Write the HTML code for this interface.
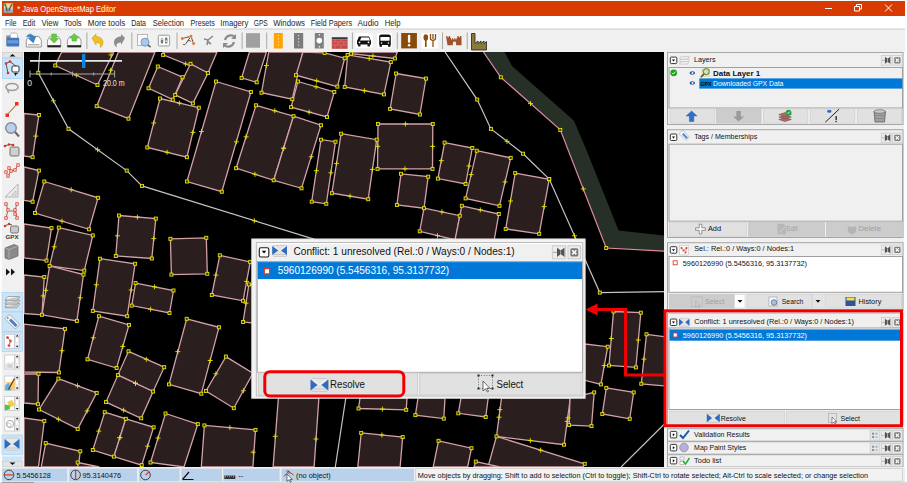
<!DOCTYPE html>
<html><head><meta charset="utf-8"><style>html,body{margin:0;padding:0;width:907px;height:483px;overflow:hidden;background:#fcfcfc}svg{display:block}text{font-family:"Liberation Sans",sans-serif}</style></head><body><svg width="907" height="483" viewBox="0 0 907 483" font-family="Liberation Sans, sans-serif"><rect x="0" y="0" width="907" height="483" fill="#fcfcfc"/><rect x="2" y="1" width="903" height="15" fill="#d83b01"/><rect x="3.8" y="3.2" width="9" height="9.2" fill="#e8dcae"/><path d="M3.8 9L7.5 7.5L12.8 10V12.4H3.8Z" fill="#7ab4e4"/><rect x="3.8" y="3.2" width="2.4" height="2.4" fill="#48b048"/><path d="M5.5 5L7.2 11.5" fill="none" stroke="#6a4a2a" stroke-width="1.1"/><path d="M12 3.8L8.8 10.8" fill="none" stroke="#8a5a20" stroke-width="1.5"/><text x="17.2" y="12.2" font-size="8.8" fill="#ffffff" textLength="98.6" lengthAdjust="spacingAndGlyphs">* Java OpenStreetMap Editor</text><path d="M825 8.5h7" fill="none" stroke="#fff" stroke-width="1"/><path d="M854.5 6.5h5v4.5h-5zM856.5 6.5v-2h5v4.5h-2" fill="none" stroke="#fff" stroke-width="1"/><path d="M885 4.5l7 7M892 4.5l-7 7" fill="none" stroke="#fff" stroke-width="1"/><rect x="2" y="16" width="903" height="12.5" fill="#ffffff"/><text x="4.9" y="25.5" font-size="8.6" fill="#1e1e1e" textLength="11.6" lengthAdjust="spacingAndGlyphs">File</text><text x="22.7" y="25.5" font-size="8.6" fill="#1e1e1e" textLength="12.6" lengthAdjust="spacingAndGlyphs">Edit</text><text x="41.5" y="25.5" font-size="8.6" fill="#1e1e1e" textLength="16.9" lengthAdjust="spacingAndGlyphs">View</text><text x="64" y="25.5" font-size="8.6" fill="#1e1e1e" textLength="17.6" lengthAdjust="spacingAndGlyphs">Tools</text><text x="87.8" y="25.5" font-size="8.6" fill="#1e1e1e" textLength="37.4" lengthAdjust="spacingAndGlyphs">More tools</text><text x="131.2" y="25.5" font-size="8.6" fill="#1e1e1e" textLength="14.8" lengthAdjust="spacingAndGlyphs">Data</text><text x="152.8" y="25.5" font-size="8.6" fill="#1e1e1e" textLength="31.3" lengthAdjust="spacingAndGlyphs">Selection</text><text x="190.5" y="25.5" font-size="8.6" fill="#1e1e1e" textLength="24.3" lengthAdjust="spacingAndGlyphs">Presets</text><text x="220.3" y="25.5" font-size="8.6" fill="#1e1e1e" textLength="28" lengthAdjust="spacingAndGlyphs">Imagery</text><text x="253.8" y="25.5" font-size="8.6" fill="#1e1e1e" textLength="13.9" lengthAdjust="spacingAndGlyphs">GPS</text><text x="273.2" y="25.5" font-size="8.6" fill="#1e1e1e" textLength="31.8" lengthAdjust="spacingAndGlyphs">Windows</text><text x="310.7" y="25.5" font-size="8.6" fill="#1e1e1e" textLength="41.4" lengthAdjust="spacingAndGlyphs">Field Papers</text><text x="357.6" y="25.5" font-size="8.6" fill="#1e1e1e" textLength="21" lengthAdjust="spacingAndGlyphs">Audio</text><text x="384.8" y="25.5" font-size="8.6" fill="#1e1e1e" textLength="15.8" lengthAdjust="spacingAndGlyphs">Help</text><rect x="2" y="28.4" width="903" height="1.4" fill="#d2d2d2"/><rect x="2" y="29.8" width="903" height="22.2" fill="#f0f0f0"/><rect x="86.4" y="32.5" width="1" height="16.5" fill="#a8a8a8"/><rect x="131.3" y="32.5" width="1" height="16.5" fill="#a8a8a8"/><rect x="176.5" y="32.5" width="1" height="16.5" fill="#a8a8a8"/><rect x="241.6" y="32.5" width="1" height="16.5" fill="#a8a8a8"/><rect x="266.2" y="32.5" width="1" height="16.5" fill="#a8a8a8"/><rect x="351.9" y="32.5" width="1" height="16.5" fill="#a8a8a8"/><rect x="396.8" y="32.5" width="1" height="16.5" fill="#a8a8a8"/><rect x="442" y="32.5" width="1" height="16.5" fill="#a8a8a8"/><rect x="466.7" y="32.5" width="1" height="16.5" fill="#a8a8a8"/><rect x="6.3" y="35.5" width="4.5" height="10.5" fill="#8a8a8a"/><path d="M10.3 38.6v-3.6c0-1.5 1-2 2.5-2h2.5c1.5 0 2.3 1 2.3 2.5v3.1z" fill="#ffffff" stroke="#9a9a9a" stroke-width="0.7"/><rect x="6.6" y="37.8" width="12.6" height="8.7" fill="#3f78c4" rx="0.8"/><rect x="7.4" y="40.2" width="11" height="3.2" fill="#6c9ad8"/><path d="M26.3 40l2.5-3.6h10l2.5 3.6v7h-15z" fill="#ffffff" stroke="#8a8a8a" stroke-width="0.9"/><rect x="28" y="44" width="11.5" height="1.4" fill="#b0b0b0"/><path d="M26.5 36.5c1.5-3 6-3.5 7.5 0.5l1.8-0.6l-2.4 6.5l-5-4.3l2-0.6c-1-1.6-2.6-1.4-3.9-1.5z" fill="#3a84cc" stroke="#2a64a8" stroke-width="0.4"/><path d="M47.5 40l2.5-3.6h8.2l2.5 3.6v7h-13.2z" fill="#f8f8f8" stroke="#8a8a8a" stroke-width="0.8"/><rect x="47.5" y="45.2" width="13.2" height="2" fill="#222"/><path d="M51.8 34h4.6v4.5h2.2l-4.5 4.6l-4.5-4.6h2.2z" fill="#66cc44" stroke="#48a830" stroke-width="0.5"/><path d="M67.4 40l2.5-3.6h8.6l2.5 3.6v7h-13.6z" fill="#f8f8f8" stroke="#8a8a8a" stroke-width="0.8"/><rect x="67.4" y="45.2" width="13.6" height="2" fill="#222"/><path d="M74.2 33.5l4.6 4.6h-2.2v3h-4.6v-3h-2.2z" fill="#66cc44" stroke="#48a830" stroke-width="0.5"/><path d="M92 38l4-4v2.5c4 0 7 2.5 7 6c0 2.5-1.5 4.5-3 5c1-1.5 1-5-4-5v2.5z" fill="#f0c020" stroke="#c09010" stroke-width="0.5"/><path d="M125 38l-4-4v2.5c-4 0-7 2.5-7 6c0 2.5 1.5 4.5 3 5c-1-1.5-1-5 4-5v2.5z" fill="#8c8c8c"/><rect x="137.5" y="34.5" width="10" height="11" fill="#fafafa" stroke="#a8a8a8" stroke-width="0.8"/><circle cx="145" cy="42.2" r="4" fill="#a8c8f0" stroke="#7a98c0" stroke-width="1"/><path d="M147.8 45l2.8 2.2" fill="none" stroke="#666" stroke-width="1.6"/><rect x="158.3" y="35.2" width="11.3" height="10.8" fill="#fafafa" stroke="#9a9a9a" stroke-width="1" rx="1.2"/><rect x="160.8" y="38" width="2.4" height="5.5" fill="#6a7a80" rx="1"/><rect x="165" y="37.5" width="2.4" height="6" fill="#6a7a80" rx="1"/><rect x="161.3" y="38.5" width="1.4" height="1.4" fill="#fff"/><rect x="165.5" y="40.5" width="1.4" height="1.4" fill="#fff"/><path d="M182.4 38.5L190.9 36.2L193.6 43.5M190.9 36.2L186 43.5c-1 1.5-2.5 1.5-3 .5M188 41c1-1 2.5-.5 3 .5" fill="none" stroke="#443333" stroke-width="0.9"/><path d="M183 38.3l7.5-2" fill="none" stroke="#a8a020" stroke-width="0.5"/><circle cx="182.4" cy="38.5" r="1.7" fill="#f07020" stroke="#fff" stroke-width="0.4"/><circle cx="190.9" cy="36.2" r="1.7" fill="#f07020" stroke="#fff" stroke-width="0.4"/><circle cx="193.6" cy="43.5" r="1.7" fill="#f07020" stroke="#fff" stroke-width="0.4"/><path d="M204 39l4 1l5-4M208 40l-1 5M207 41l4 3" fill="none" stroke="#8a8a8a" stroke-width="1.6"/><path d="M225 40a6 6 0 0 1 10-3M234 42a6 6 0 0 1-10 3" fill="none" stroke="#8c8c8c" stroke-width="2.2"/><path d="M236 34v5h-5zM223 48v-5h5z" fill="#8c8c8c"/><rect x="246" y="33.2" width="14" height="14.5" fill="#a0a0a0"/><rect x="273.8" y="33" width="9" height="15.5" fill="#ffa300"/><path d="M278.3 35v12" fill="none" stroke="#fff" stroke-width="0.8" stroke-dasharray="1.2 2"/><rect x="294" y="33" width="9.2" height="15.5" fill="#7c7c7c"/><path d="M298.6 35v12" fill="none" stroke="#fff" stroke-width="0.8" stroke-dasharray="1.2 2"/><rect x="314.8" y="33" width="9" height="15.5" fill="#808080"/><circle cx="319.3" cy="40.6" r="2.8" fill="#fff"/><rect x="318.8" y="34" width="1" height="1.5" fill="#fff"/><rect x="318.8" y="46" width="1" height="1.5" fill="#fff"/><rect x="331.8" y="37.2" width="15.8" height="2" fill="#3a3a3a"/><rect x="331.8" y="39.2" width="15.8" height="9.6" fill="#c84848"/><path d="M331.8 42h15.8M331.8 45h15.8M335 39.2v2.8M341 39.2v2.8M338 42v3M344 42v3M335 45v3.8M341 45v3.8" fill="none" stroke="#e08a8a" stroke-width="0.5"/><rect x="355.5" y="33" width="17" height="15" fill="#ffffff"/><path d="M357 41l2-4.5h10l2 4.5v3.5h-14z" fill="#111"/><path d="M360 40.5l1.3-3h7.4l1.3 3z" fill="#fff"/><rect x="358" y="44.2" width="2.5" height="2.2" fill="#111"/><rect x="367.5" y="44.2" width="2.5" height="2.2" fill="#111"/><circle cx="359.5" cy="42.3" r="0.9" fill="#fff"/><circle cx="368.5" cy="42.3" r="0.9" fill="#fff"/><rect x="377" y="33" width="15" height="15" fill="#ffffff"/><path d="M379.2 45v-8.5c0-1.3 1-2 2.5-2h6.6c1.5 0 2.5 0.7 2.5 2v8.5z" fill="#111"/><rect x="380.4" y="37" width="9.2" height="3.8" fill="#fff" rx="0.6"/><circle cx="381.6" cy="43" r="0.8" fill="#fff"/><circle cx="388.4" cy="43" r="0.8" fill="#fff"/><rect x="379.6" y="44.5" width="2.3" height="2.3" fill="#111"/><rect x="388.1" y="44.5" width="2.3" height="2.3" fill="#111"/><rect x="401.2" y="33" width="15.7" height="15.4" fill="#8a4a08"/><rect x="407.9" y="34.8" width="2.4" height="8" fill="#fff" rx="1"/><circle cx="409.1" cy="45.3" r="1.3" fill="#fff"/><rect x="421.5" y="33" width="16" height="15.5" fill="#ffffff"/><ellipse cx="425.8" cy="37.5" rx="2.3" ry="3.3" fill="#8a4f10"/><rect x="425" y="39" width="1.6" height="8" fill="#8a4f10"/><path d="M430.5 34v4.5c0 1 1 1.8 2.5 1.8s2.5-.8 2.5-1.8V34M433 34v5M433 40v7" fill="none" stroke="#8a4f10" stroke-width="1.3"/><path d="M446 36h1.4v1.3h1.4v-1.3h1.4v2h0.8v1.5h1v-1.3h1.2v1.3h1.1v-1.3h1.2v1.3h1v-1.5h0.8v-2h1.4v1.3h1.4v-1.3h1.4v9.3h-5.4v-2.2c0-0.9-0.8-1.6-1.6-1.6s-1.6 0.7-1.6 1.6v2.2h-5.4z" fill="#a0522d"/><path d="M471.5 33.5h3.5v10l3-2.5v2.5l3-2.5v2.5l3-2.5v2.5l2.5-2v8.5h-15z" fill="#8a7a3a" stroke="#222" stroke-width="0.8"/><rect x="2" y="52" width="22" height="415" fill="#f0f0f0"/><rect x="2.5" y="52.5" width="20" height="5" fill="#e4e4e4" stroke="#c8c8c8" stroke-width="0.6"/><path d="M9.5 56.5l3-2.6l3 2.6z" fill="#111"/><rect x="2.5" y="58.7" width="20" height="20" fill="#cce4f7" stroke="#99c9ef" stroke-width="0.6"/><path d="M6 63.5L10 61.5L17 67M6 63.5L8 73" fill="none" stroke="#333" stroke-width="0.8"/><circle cx="6" cy="63.5" r="1.3" fill="#e03020"/><circle cx="10" cy="61.5" r="1.3" fill="#e03020"/><circle cx="8" cy="73" r="1.3" fill="#e03020"/><rect x="12" y="66" width="7" height="6" fill="#fff" stroke="#222" stroke-width="0.9" rx="1"/><path d="M14 73l1.5 3l1-2l2-1z" fill="#111"/><ellipse cx="12" cy="87" rx="6" ry="3.5" fill="none" stroke="#9a9a9a" stroke-width="1.6"/><path d="M8 89c-1 2 0 3 1 4" fill="none" stroke="#9a9a9a" stroke-width="1.4"/><path d="M7 115L17 104" fill="none" stroke="#333" stroke-width="1"/><path d="M7.5 114.5L16.5 104.5" fill="none" stroke="#e8c020" stroke-width="0.7"/><rect x="15" y="102" width="3.5" height="3.5" fill="#f03020"/><rect x="5.5" y="113.5" width="3.5" height="3.5" fill="#f03020"/><circle cx="11" cy="128" r="5.3" fill="#b8d0f0" stroke="#8a8a8a" stroke-width="1.4"/><path d="M15 132l4 4.5" fill="none" stroke="#666" stroke-width="2"/><path d="M5 146l4-1.5l4 0.5" fill="none" stroke="#333" stroke-width="0.8"/><circle cx="5" cy="146" r="1.3" fill="#e03020"/><circle cx="9" cy="144.5" r="1.3" fill="#e03020"/><circle cx="13" cy="145" r="1.3" fill="#e03020"/><rect x="10" y="147" width="9" height="9" fill="#d0d0d0" stroke="#555" stroke-width="0.8" rx="1.5"/><path d="M8 176l3-5l4-1l3-5M11 171l-2-3" fill="none" stroke="#444" stroke-width="0.7"/><rect x="6.8" y="174.8" width="2.4" height="2.4" fill="#fff" stroke="#e03020" stroke-width="0.8"/><rect x="9.8" y="169.8" width="2.4" height="2.4" fill="#fff" stroke="#e03020" stroke-width="0.8"/><rect x="13.8" y="168.8" width="2.4" height="2.4" fill="#fff" stroke="#e03020" stroke-width="0.8"/><rect x="16.8" y="163.8" width="2.4" height="2.4" fill="#fff" stroke="#e03020" stroke-width="0.8"/><rect x="7.8" y="166.8" width="2.4" height="2.4" fill="#fff" stroke="#e03020" stroke-width="0.8"/><rect x="4.8" y="170.8" width="2.4" height="2.4" fill="#fff" stroke="#e03020" stroke-width="0.8"/><path d="M5 197L18 184V197Z" fill="#e8e8e8" stroke="#a8a8a8" stroke-width="0.8"/><path d="M12 195l4-4v4z" fill="none" stroke="#a8a8a8" stroke-width="0.6"/><path d="M6 204l2 6l-2 8M17 204l-2 6l2 8M10 211h4" fill="none" stroke="#444" stroke-width="0.7"/><rect x="4.8" y="202.8" width="2.4" height="2.4" fill="#fff" stroke="#e03020" stroke-width="0.8"/><rect x="6.8" y="208.8" width="2.4" height="2.4" fill="#fff" stroke="#e03020" stroke-width="0.8"/><rect x="4.8" y="216.8" width="2.4" height="2.4" fill="#fff" stroke="#e03020" stroke-width="0.8"/><rect x="15.8" y="202.8" width="2.4" height="2.4" fill="#fff" stroke="#e03020" stroke-width="0.8"/><rect x="13.8" y="208.8" width="2.4" height="2.4" fill="#fff" stroke="#e03020" stroke-width="0.8"/><rect x="15.8" y="216.8" width="2.4" height="2.4" fill="#fff" stroke="#e03020" stroke-width="0.8"/><rect x="13.8" y="212.8" width="2.4" height="2.4" fill="#fff" stroke="#e03020" stroke-width="0.8"/><path d="M5 226l4-2l3 1" fill="none" stroke="#333" stroke-width="0.8"/><circle cx="5" cy="226" r="1.2" fill="#e03020"/><circle cx="9" cy="224" r="1.2" fill="#e03020"/><rect x="10.5" y="226" width="8" height="7" fill="#c8c8c8" stroke="#555" stroke-width="0.7" rx="1.5"/><text x="5.5" y="239" font-size="4.5" fill="#333" font-weight="bold" textLength="13" lengthAdjust="spacingAndGlyphs">GPX</text><path d="M5 248l9-3.5l4 1.5v10l-9 3.5l-4-1.5z" fill="#8a8a8a" stroke="#555" stroke-width="0.6"/><path d="M5 248l4 1.5l9-3.5M9 249.5v10" fill="none" stroke="#cfcfcf" stroke-width="0.5"/><path d="M6 268.5l4 3.5l-4 3.5zM11 268.5l4 3.5l-4 3.5z" fill="#111"/><rect x="2" y="292.4" width="20.5" height="19.5" fill="#cce4f7" stroke="#a4cdef" stroke-width="0.6"/><rect x="2" y="312" width="20.5" height="19.5" fill="#cce4f7" stroke="#a4cdef" stroke-width="0.6"/><rect x="2" y="332" width="20.5" height="19.5" fill="#cce4f7" stroke="#a4cdef" stroke-width="0.6"/><rect x="2" y="435" width="20.5" height="19.5" fill="#cce4f7" stroke="#a4cdef" stroke-width="0.6"/><path d="M5.3 306.5l2.5-3h11.5l-2.5 3z" fill="#f6f6f6" stroke="#777" stroke-width="0.6"/><path d="M5.3 306.5v1.3h11.5l2.5-3v-1.3" fill="#c8c8c8" stroke="#777" stroke-width="0.5"/><path d="M5.3 303l2.5-3h11.5l-2.5 3z" fill="#f6f6f6" stroke="#777" stroke-width="0.6"/><path d="M5.3 303v1.3h11.5l2.5-3v-1.3" fill="#c8c8c8" stroke="#777" stroke-width="0.5"/><path d="M5.3 299.5l2.5-3h11.5l-2.5 3z" fill="#f6f6f6" stroke="#777" stroke-width="0.6"/><path d="M5.3 299.5v1.3h11.5l2.5-3v-1.3" fill="#c8c8c8" stroke="#777" stroke-width="0.5"/><path d="M5 318.5l3.5-3.5l2 0.2l9.3 9.3l-4.5 4.5l-9.3-9.3z" fill="#f4f4f4" stroke="#888" stroke-width="0.6"/><path d="M9 320.5l2-2l6.5 6.5l-2 2z" fill="#4a7ac8"/><circle cx="7.8" cy="318" r="0.9" fill="#888"/><rect x="4.8" y="334.2" width="10" height="14" fill="#fff" stroke="#b8b8b8" stroke-width="0.6"/><rect x="14.8" y="334.2" width="4.8" height="14" fill="#f0f0f0" stroke="#b8b8b8" stroke-width="0.5"/><path d="M15.7 336.5l1.5-1.8l1.5 1.8z" fill="#222"/><path d="M15.7 345.7l1.5 1.8l1.5-1.8z" fill="#222"/><rect x="15.6" y="337.7" width="3.2" height="5" fill="#fff" stroke="#ccc" stroke-width="0.4"/><path d="M7.5 337.5l3 3.5l-1.5 4.5" fill="none" stroke="#444" stroke-width="0.8"/><circle cx="7.5" cy="337.5" r="1.5" fill="#e83a2a" stroke="#fff" stroke-width="0.3"/><circle cx="10.5" cy="341" r="1.5" fill="#e83a2a" stroke="#fff" stroke-width="0.3"/><circle cx="9" cy="345.5" r="1.5" fill="#e83a2a" stroke="#fff" stroke-width="0.3"/><rect x="4.8" y="355" width="10" height="14" fill="#fff" stroke="#b8b8b8" stroke-width="0.6"/><rect x="14.8" y="355" width="4.8" height="14" fill="#f0f0f0" stroke="#b8b8b8" stroke-width="0.5"/><path d="M15.7 357.3l1.5-1.8l1.5 1.8z" fill="#222"/><path d="M15.7 366.5l1.5 1.8l1.5-1.8z" fill="#222"/><rect x="15.6" y="358.5" width="3.2" height="5" fill="#fff" stroke="#ccc" stroke-width="0.4"/><path d="M5.5 368.5v-4l3-2.5l2 2l3-3v7.5z" fill="#e0e0e0"/><circle cx="10" cy="366" r="2" fill="#d0d0d0"/><rect x="4.8" y="376" width="10" height="14" fill="#fff" stroke="#b8b8b8" stroke-width="0.6"/><rect x="14.8" y="376" width="4.8" height="14" fill="#f0f0f0" stroke="#b8b8b8" stroke-width="0.5"/><path d="M15.7 378.3l1.5-1.8l1.5 1.8z" fill="#222"/><path d="M15.7 387.5l1.5 1.8l1.5-1.8z" fill="#222"/><rect x="15.6" y="379.5" width="3.2" height="5" fill="#fff" stroke="#ccc" stroke-width="0.4"/><path d="M5.2 382l6 8h3.6v-8z" fill="#f0d070"/><path d="M5.2 385l3.5-2l2.5 7.5h-6z" fill="#60b0e0"/><path d="M8.5 389.5l6-11" fill="none" stroke="#8a3a10" stroke-width="1.4"/><rect x="4.8" y="396.5" width="10" height="14" fill="#fff" stroke="#b8b8b8" stroke-width="0.6"/><rect x="14.8" y="396.5" width="4.8" height="14" fill="#f0f0f0" stroke="#b8b8b8" stroke-width="0.5"/><path d="M15.7 398.8l1.5-1.8l1.5 1.8z" fill="#222"/><path d="M15.7 408l1.5 1.8l1.5-1.8z" fill="#222"/><rect x="15.6" y="400" width="3.2" height="5" fill="#fff" stroke="#ccc" stroke-width="0.4"/><path d="M7 402l5-2l3 5l-5 2.5z" fill="#f0d040"/><path d="M4.8 404.5l5 1v3.8l-5 1.2z" fill="#50c050"/><rect x="4.8" y="417" width="10" height="14" fill="#fff" stroke="#b8b8b8" stroke-width="0.6"/><rect x="14.8" y="417" width="4.8" height="14" fill="#f0f0f0" stroke="#b8b8b8" stroke-width="0.5"/><path d="M15.7 419.3l1.5-1.8l1.5 1.8z" fill="#222"/><path d="M15.7 428.5l1.5 1.8l1.5-1.8z" fill="#222"/><rect x="15.6" y="420.5" width="3.2" height="5" fill="#fff" stroke="#ccc" stroke-width="0.4"/><circle cx="10" cy="424" r="3.6" fill="none" stroke="#aaa" stroke-width="1"/><circle cx="9" cy="425" r="2" fill="none" stroke="#bbb" stroke-width="0.7"/><path d="M6 438h12v12h-12z" fill="#e8e8e8" stroke="#c0c0c0" stroke-width="0.7"/><path d="M6.5 448h11" fill="none" stroke="#bbb" stroke-width="0.8"/><path d="M4.5 439v10l6.5-5zM19.5 439v10l-6.5-5z" fill="#2f6cc0"/><rect x="2.5" y="456.5" width="20" height="10" fill="#cce4f7"/><rect x="2.5" y="461.5" width="20" height="5" fill="#e4e4e4" stroke="#c8c8c8" stroke-width="0.6"/><path d="M9.5 462.5l3 2.6l3-2.6z" fill="#111"/><svg x="24" y="52" width="640" height="415" viewBox="24 52 640 415"><rect x="24" y="52" width="640" height="415" fill="#000"/><polygon points="483.4,52 500.8,77.3 560.3,129.9 606.2,248 665,251.1 665,235.6 618.6,230.6 586.4,150 574,120.7 512,66.1 504.5,52" fill="#263026"/><g fill="#2a1e1e" stroke="#d2a2a6" stroke-width="1.3"><polygon points="61.7,52 55.2,65.5 97.5,85 113.8,52"/><polygon points="118.4,52 96.7,106.2 128.5,118.7 155,52"/><polygon points="157.8,66.5 182.5,77.2 172.8,99.7 148.5,88.3"/><polygon points="163,52 163.1,54.9 208,73 217,52"/><polygon points="190.5,63.8 208,73 192.9,103.4 175.2,94.9"/><polygon points="160,98.5 198.8,107.7 186.9,157.2 147.3,147.5"/><polygon points="216,81.5 250.9,92 221.8,191.7 186.9,181.5"/><polygon points="24,113.5 38.9,115 32.6,157.2 24,156"/><polygon points="249.4,52 241.6,77.9 256.7,82.3 266.4,52"/><polygon points="268.8,52 261.5,92.7 292.3,99.2 302.8,52"/><polygon points="303,52 296,75.2 337.4,86.6 344.7,58.2 324.6,52.9"/><polygon points="347.6,54.9 390.8,62.1 384,94.4 344.7,86.9"/><polygon points="351,52 351,53.6 394.9,58.5 397.4,52"/><polygon points="396.1,73.5 426,78.6 419.9,114.5 390.1,108.9"/><polygon points="297.9,81.5 334.3,92 327,117 291.1,107.2"/><polygon points="256,105.3 293.5,116.2 273.7,180.3 236.1,168.2"/><polygon points="293.5,116.2 321,125.2 301.5,188.3 273.7,180.3"/><polygon points="321,139.7 335.5,141.7 326.3,203.8 311.7,201.7"/><polygon points="341.1,133.7 376.7,139.7 368.2,199.2 331.9,193.2"/><polygon points="378,124 432.8,124 432.5,168.9 377.5,168.9"/><polygon points="444.6,142.6 472.3,148 465.6,184 437.9,178.6"/><polygon points="401,173.8 428.2,176.7 424,208.2 396.9,205"/><polygon points="424,208.2 459.8,215.7 455.4,240 419.7,231.3"/><polygon points="461.8,205.8 498.8,214 493.3,245 455,240"/><polygon points="476.7,150.7 510.7,157.9 499.5,205.8 465.6,198.4"/><polygon points="515.2,173.1 549.2,179.3 539.2,233.8 505.7,228.9"/><polygon points="24,167 38.9,170.6 32.6,201.7 24,200.4"/><polygon points="44.3,181.5 98.1,197.8 89.1,229.3 35,213"/><polygon points="24,224 51.5,228.1 46.5,260.6 24,257.9"/><polygon points="58.8,227.6 92.8,235.4 84.3,270.6 49.6,265.9"/><polygon points="119,215.5 155.8,218.6 151.8,258.5 115.8,256"/><polygon points="170.4,238.8 206.3,237.8 207.3,273.8 171.4,274.6"/><polygon points="219.8,255.3 250.2,261.9 243.1,300.8 211.8,295"/><polygon points="49.6,265.9 83.5,274.6 76.9,320.9 42,314.8"/><polygon points="24,275 44.3,277 42,314.8 24,313.5"/><polygon points="99.9,258.7 135.1,263.8 127.2,316.2 92.8,310.9"/><polygon points="135.6,283.1 173.5,290.5 169.5,313 131.7,305.6"/><polygon points="24,324.1 65,328.9 58.9,372.5 24,372"/><polygon points="98.9,316.2 129,324.9 116.6,368 87.5,359.3"/><polygon points="186.7,318.8 219,327.3 201.3,393.7 169,384.4"/><polygon points="248.9,284.4 262,286 262,324 243.1,322"/><polygon points="24,374 38.5,373.8 38,404.2 24,403"/><polygon points="58.4,378.6 96.7,392.9 77.7,428.9 39,409.5"/><polygon points="24,418 44.3,420.9 38.5,467 24,467"/><polygon points="45.7,443.1 80.3,451.3 78.2,467 41.2,467"/><polygon points="128.5,351.3 164.2,367.2 153.1,391.5 117.9,375.1"/><polygon points="117.9,375.1 153.1,391.5 141.2,418.3 106,402.1"/><polygon points="225.9,356.6 252.9,373.3 233.8,408.2 206,391"/><polygon points="104.7,412.2 125.8,418.8 113.9,456.6 92.8,450"/><polygon points="125.8,418.8 153.6,427.3 141.7,465.1 113.9,456.6"/><polygon points="165.5,413.5 197.8,424.1 184,467 150.5,462.5"/><polygon points="204.4,425.4 255.5,429.9 252.9,467 201.3,467"/><polygon points="77.7,462.5 99.4,467 78,467"/><polygon points="278.4,398 318.9,398 314.1,467 273.1,467"/><polygon points="360,398 358.5,408.5 406.2,409.8 407,398"/><polygon points="418,398 415.4,415.1 443.8,418.6 445,398"/><polygon points="461,398 458.3,413.3 485.7,417 488.2,398"/><polygon points="361.2,432.9 402.7,437.1 400.1,467 357.8,467"/><polygon points="438.5,440.8 471.5,448.2 467.6,467 433.2,467"/><polygon points="501.5,398 570.3,398 564.1,444.7 496.5,436.4"/><polygon points="496.5,436.4 584.7,463.8 583,467 488,467"/><polygon points="570,398 594.2,392.4 591.5,426.1 569.1,425.1"/><polygon points="475.8,461.6 500,467 474,467"/><polygon points="613.5,311.5 640.8,312.7 635.9,367.4 609,365.5"/><polygon points="646.5,334.3 665,336.8 665,386 641.3,383.8"/><polygon points="584.8,344 607.7,346.7 600.9,384.4 584.8,380.3"/><polygon points="606.3,387.9 633.7,392.4 629.7,418.8 602.3,414"/></g><g fill="none" stroke="#c4c4c4" stroke-width="1.2"><polyline points="39.7,52 38.3,72.8 68.5,128.8 126.7,170.6 142,185.9 366.6,255.4"/><polyline points="445,52 477.2,99.6 490.9,128.9 523.1,153.7 549.2,179 599.8,292.6 665,291.6"/><polyline points="345.8,398 335.3,467"/><polyline points="621.1,467 665,423.4"/></g><polyline points="483.4,52 500.8,77.3 560.3,129.9 606.2,248 665,251.1" fill="none" stroke="#e08aa0" stroke-width="1.2"/><g fill="#3a3000" stroke="#e6e600" stroke-width="0.9"><rect x="504.2" y="227.4" width="3" height="3"/><rect x="346.1" y="53.4" width="3" height="3"/><rect x="592.7" y="390.9" width="3" height="3"/><rect x="91.3" y="309.4" width="3" height="3"/><rect x="254.5" y="103.8" width="3" height="3"/><rect x="498" y="204.3" width="3" height="3"/><rect x="67" y="127.3" width="3" height="3"/><rect x="395.4" y="203.5" width="3" height="3"/><rect x="87.6" y="227.8" width="3" height="3"/><rect x="117.5" y="214" width="3" height="3"/><rect x="31.1" y="155.7" width="3" height="3"/><rect x="147" y="86.8" width="3" height="3"/><rect x="475.2" y="149.2" width="3" height="3"/><rect x="604.8" y="386.4" width="3" height="3"/><rect x="206.5" y="71.5" width="3" height="3"/><rect x="45" y="259.1" width="3" height="3"/><rect x="290.8" y="97.7" width="3" height="3"/><rect x="44.2" y="441.6" width="3" height="3"/><rect x="474.3" y="460.1" width="3" height="3"/><rect x="634.4" y="365.9" width="3" height="3"/><rect x="335.9" y="85.1" width="3" height="3"/><rect x="91.3" y="233.9" width="3" height="3"/><rect x="248.7" y="260.4" width="3" height="3"/><rect x="169.9" y="273.1" width="3" height="3"/><rect x="205.8" y="272.3" width="3" height="3"/><rect x="145.8" y="146" width="3" height="3"/><rect x="96.6" y="196.3" width="3" height="3"/><rect x="48.1" y="264.4" width="3" height="3"/><rect x="599.4" y="382.9" width="3" height="3"/><rect x="418.2" y="229.8" width="3" height="3"/><rect x="199.8" y="392.2" width="3" height="3"/><rect x="196.3" y="422.6" width="3" height="3"/><rect x="388.6" y="107.4" width="3" height="3"/><rect x="497.3" y="212.5" width="3" height="3"/><rect x="204.8" y="236.3" width="3" height="3"/><rect x="247.4" y="282.9" width="3" height="3"/><rect x="112.4" y="455.1" width="3" height="3"/><rect x="349.5" y="52.1" width="3" height="3"/><rect x="86" y="357.8" width="3" height="3"/><rect x="547.7" y="177.8" width="3" height="3"/><rect x="343.2" y="56.7" width="3" height="3"/><rect x="158.5" y="97" width="3" height="3"/><rect x="359.7" y="431.4" width="3" height="3"/><rect x="254" y="428.4" width="3" height="3"/><rect x="33.5" y="211.5" width="3" height="3"/><rect x="82" y="273.1" width="3" height="3"/><rect x="214.5" y="80" width="3" height="3"/><rect x="42.8" y="275.5" width="3" height="3"/><rect x="330.4" y="191.7" width="3" height="3"/><rect x="97.4" y="314.7" width="3" height="3"/><rect x="357" y="407" width="3" height="3"/><rect x="173.7" y="93.4" width="3" height="3"/><rect x="513.7" y="171.6" width="3" height="3"/><rect x="42.8" y="419.4" width="3" height="3"/><rect x="139.7" y="416.8" width="3" height="3"/><rect x="393.4" y="57" width="3" height="3"/><rect x="164" y="412" width="3" height="3"/><rect x="470" y="446.7" width="3" height="3"/><rect x="232.3" y="406.7" width="3" height="3"/><rect x="323.1" y="51.4" width="3" height="3"/><rect x="185.4" y="155.7" width="3" height="3"/><rect x="103.2" y="410.7" width="3" height="3"/><rect x="91.3" y="448.5" width="3" height="3"/><rect x="234.6" y="166.7" width="3" height="3"/><rect x="443.1" y="141.1" width="3" height="3"/><rect x="241.6" y="320.5" width="3" height="3"/><rect x="484.2" y="415.5" width="3" height="3"/><rect x="376.5" y="122.5" width="3" height="3"/><rect x="114.3" y="254.5" width="3" height="3"/><rect x="40.5" y="313.3" width="3" height="3"/><rect x="470.8" y="146.5" width="3" height="3"/><rect x="42.8" y="180" width="3" height="3"/><rect x="154.3" y="217.1" width="3" height="3"/><rect x="260" y="91.2" width="3" height="3"/><rect x="436.4" y="177.1" width="3" height="3"/><rect x="606.2" y="345.2" width="3" height="3"/><rect x="389.3" y="60.6" width="3" height="3"/><rect x="98.4" y="257.2" width="3" height="3"/><rect x="343.2" y="85.4" width="3" height="3"/><rect x="325.5" y="115.5" width="3" height="3"/><rect x="567.6" y="423.6" width="3" height="3"/><rect x="332.8" y="90.5" width="3" height="3"/><rect x="366.7" y="197.7" width="3" height="3"/><rect x="475.7" y="98.1" width="3" height="3"/><rect x="37.5" y="408" width="3" height="3"/><rect x="628.2" y="417.3" width="3" height="3"/><rect x="37.4" y="113.5" width="3" height="3"/><rect x="426.7" y="175.2" width="3" height="3"/><rect x="104.5" y="400.6" width="3" height="3"/><rect x="95.2" y="391.4" width="3" height="3"/><rect x="424.5" y="77.1" width="3" height="3"/><rect x="464.1" y="196.9" width="3" height="3"/><rect x="442.3" y="417.1" width="3" height="3"/><rect x="241.6" y="299.3" width="3" height="3"/><rect x="509.2" y="156.4" width="3" height="3"/><rect x="53.7" y="64" width="3" height="3"/><rect x="197.3" y="106.2" width="3" height="3"/><rect x="460.3" y="204.3" width="3" height="3"/><rect x="632.2" y="390.9" width="3" height="3"/><rect x="495" y="434.9" width="3" height="3"/><rect x="75.4" y="319.4" width="3" height="3"/><rect x="37.4" y="169.1" width="3" height="3"/><rect x="36.8" y="71.3" width="3" height="3"/><rect x="185.2" y="317.3" width="3" height="3"/><rect x="255.2" y="80.8" width="3" height="3"/><rect x="133.6" y="262.3" width="3" height="3"/><rect x="82.8" y="269.1" width="3" height="3"/><rect x="562.6" y="443.2" width="3" height="3"/><rect x="78.8" y="449.8" width="3" height="3"/><rect x="382.5" y="92.9" width="3" height="3"/><rect x="431.3" y="122.5" width="3" height="3"/><rect x="168.9" y="237.3" width="3" height="3"/><rect x="124.3" y="417.3" width="3" height="3"/><rect x="590" y="424.6" width="3" height="3"/><rect x="125.2" y="169.1" width="3" height="3"/><rect x="324.8" y="202.3" width="3" height="3"/><rect x="521.6" y="152.2" width="3" height="3"/><rect x="422.5" y="206.7" width="3" height="3"/><rect x="334" y="140.2" width="3" height="3"/><rect x="489.4" y="127.4" width="3" height="3"/><rect x="401.2" y="435.6" width="3" height="3"/><rect x="547.7" y="177.5" width="3" height="3"/><rect x="639.8" y="382.3" width="3" height="3"/><rect x="191.4" y="101.9" width="3" height="3"/><rect x="161.6" y="53.4" width="3" height="3"/><rect x="151.6" y="390" width="3" height="3"/><rect x="418.4" y="113" width="3" height="3"/><rect x="127" y="117.2" width="3" height="3"/><rect x="57.4" y="371" width="3" height="3"/><rect x="583.2" y="462.3" width="3" height="3"/><rect x="36.5" y="402.7" width="3" height="3"/><rect x="95.2" y="104.7" width="3" height="3"/><rect x="300" y="186.8" width="3" height="3"/><rect x="115.1" y="366.5" width="3" height="3"/><rect x="116.4" y="373.6" width="3" height="3"/><rect x="558.8" y="128.4" width="3" height="3"/><rect x="537.7" y="232.3" width="3" height="3"/><rect x="76.2" y="461" width="3" height="3"/><rect x="464.1" y="182.5" width="3" height="3"/><rect x="220.3" y="190.2" width="3" height="3"/><rect x="319.5" y="138.2" width="3" height="3"/><rect x="437" y="439.3" width="3" height="3"/><rect x="272.2" y="178.8" width="3" height="3"/><rect x="127.5" y="323.4" width="3" height="3"/><rect x="240.1" y="76.4" width="3" height="3"/><rect x="185.4" y="180" width="3" height="3"/><rect x="204.5" y="389.5" width="3" height="3"/><rect x="202.9" y="423.9" width="3" height="3"/><rect x="499.3" y="75.8" width="3" height="3"/><rect x="249.4" y="90.5" width="3" height="3"/><rect x="645" y="332.8" width="3" height="3"/><rect x="612" y="310" width="3" height="3"/><rect x="292" y="114.7" width="3" height="3"/><rect x="289.6" y="105.7" width="3" height="3"/><rect x="156.3" y="65" width="3" height="3"/><rect x="162.7" y="365.7" width="3" height="3"/><rect x="37" y="372.3" width="3" height="3"/><rect x="399.5" y="172.3" width="3" height="3"/><rect x="140.5" y="184.4" width="3" height="3"/><rect x="181" y="75.7" width="3" height="3"/><rect x="375.2" y="138.2" width="3" height="3"/><rect x="607.5" y="364" width="3" height="3"/><rect x="171.3" y="98.2" width="3" height="3"/><rect x="96" y="83.5" width="3" height="3"/><rect x="600.8" y="412.5" width="3" height="3"/><rect x="217.5" y="325.8" width="3" height="3"/><rect x="189" y="62.3" width="3" height="3"/><rect x="598.3" y="291.1" width="3" height="3"/><rect x="294.5" y="73.7" width="3" height="3"/><rect x="339.6" y="132.2" width="3" height="3"/><rect x="63.5" y="327.4" width="3" height="3"/><rect x="310.2" y="200.2" width="3" height="3"/><rect x="456.8" y="411.8" width="3" height="3"/><rect x="218.3" y="253.8" width="3" height="3"/><rect x="50" y="226.6" width="3" height="3"/><rect x="458.3" y="214.2" width="3" height="3"/><rect x="125.7" y="314.7" width="3" height="3"/><rect x="210.3" y="293.5" width="3" height="3"/><rect x="404.7" y="408.3" width="3" height="3"/><rect x="376" y="167.4" width="3" height="3"/><rect x="172" y="289" width="3" height="3"/><rect x="319.5" y="123.7" width="3" height="3"/><rect x="296.4" y="80" width="3" height="3"/><rect x="431" y="167.4" width="3" height="3"/><rect x="127" y="349.8" width="3" height="3"/><rect x="394.6" y="72" width="3" height="3"/><rect x="224.4" y="355.1" width="3" height="3"/><rect x="76.2" y="427.4" width="3" height="3"/><rect x="149" y="461" width="3" height="3"/><rect x="134.1" y="281.6" width="3" height="3"/><rect x="639.3" y="311.2" width="3" height="3"/><rect x="604.7" y="246.5" width="3" height="3"/><rect x="56.9" y="377.1" width="3" height="3"/><rect x="57.3" y="226.1" width="3" height="3"/><rect x="130.2" y="304.1" width="3" height="3"/><rect x="152.1" y="425.8" width="3" height="3"/><rect x="31.1" y="200.2" width="3" height="3"/><rect x="167.5" y="382.9" width="3" height="3"/><rect x="413.9" y="413.6" width="3" height="3"/><rect x="140.2" y="463.6" width="3" height="3"/><rect x="150.3" y="257" width="3" height="3"/><rect x="168" y="311.5" width="3" height="3"/></g><g stroke="#e6e600" stroke-width="0.9" fill="none"><path d="M73.8 75.2h5M76.3 72.8v5"/><path d="M183.1 64h5M185.6 61.5v5"/><path d="M176.9 103.1h5M179.4 100.6v5"/><path d="M190.4 132.4h5M192.9 129.9v5"/><path d="M164.6 152.3h5M167.1 149.8v5"/><path d="M151.2 123h5M153.7 120.5v5"/><path d="M233.9 141.8h5M236.4 139.3v5"/><path d="M198.9 131.5h5M201.4 129v5"/><path d="M33.2 136.1h5M35.8 133.6v5"/><path d="M314.2 80.9h5M316.7 78.4v5"/><path d="M366.7 58.5h5M369.2 56v5"/><path d="M361.9 90.7h5M364.4 88.2v5"/><path d="M370.4 56h5M372.9 53.5v5"/><path d="M313.6 86.8h5M316.1 84.2v5"/><path d="M306.6 112.1h5M309.1 109.6v5"/><path d="M272.2 110.8h5M274.8 108.2v5"/><path d="M281.1 148.2h5M283.6 145.8v5"/><path d="M252.4 174.2h5M254.9 171.8v5"/><path d="M243.6 136.8h5M246.1 134.2v5"/><path d="M308.8 156.8h5M311.2 154.2v5"/><path d="M281.1 148.2h5M283.6 145.8v5"/><path d="M328.4 172.8h5M330.9 170.2v5"/><path d="M313.9 170.7h5M316.4 168.2v5"/><path d="M369.9 169.4h5M372.4 166.9v5"/><path d="M347.5 196.2h5M350 193.7v5"/><path d="M334 163.4h5M336.5 160.9v5"/><path d="M402.9 124h5M405.4 121.5v5"/><path d="M430.1 146.4h5M432.6 143.9v5"/><path d="M402.5 168.9h5M405 166.4v5"/><path d="M375.2 146.4h5M377.8 143.9v5"/><path d="M466.5 166h5M469 163.5v5"/><path d="M438.8 160.6h5M441.2 158.1v5"/><path d="M439.4 211.9h5M441.9 209.4v5"/><path d="M435 235.7h5M437.5 233.2v5"/><path d="M477.8 209.9h5M480.3 207.4v5"/><path d="M502.6 181.9h5M505.1 179.4v5"/><path d="M468.6 174.6h5M471.1 172.1v5"/><path d="M541.7 206.6h5M544.2 204.1v5"/><path d="M508 201h5M510.5 198.5v5"/><path d="M68.7 189.7h5M71.2 187.2v5"/><path d="M59.5 221.2h5M62 218.7v5"/><path d="M51.7 246.8h5M54.2 244.2v5"/><path d="M134.9 217.1h5M137.4 214.6v5"/><path d="M151.3 238.6h5M153.8 236.1v5"/><path d="M114.9 235.8h5M117.4 233.2v5"/><path d="M244.1 281.4h5M246.6 278.9v5"/><path d="M213.3 275.1h5M215.8 272.6v5"/><path d="M77.7 297.8h5M80.2 295.2v5"/><path d="M43.3 290.4h5M45.8 287.9v5"/><path d="M40.6 295.9h5M43.1 293.4v5"/><path d="M128.7 290h5M131.2 287.5v5"/><path d="M93.8 284.8h5M96.3 282.3v5"/><path d="M152.1 286.8h5M154.6 284.3v5"/><path d="M148.1 309.3h5M150.6 306.8v5"/><path d="M59.5 350.7h5M62 348.2v5"/><path d="M120.3 346.4h5M122.8 343.9v5"/><path d="M90.7 337.8h5M93.2 335.2v5"/><path d="M207.7 360.5h5M210.2 358v5"/><path d="M175.3 351.6h5M177.8 349.1v5"/><path d="M243.5 303.2h5M246 300.7v5"/><path d="M75 385.8h5M77.5 383.2v5"/><path d="M84.7 410.9h5M87.2 408.4v5"/><path d="M55.9 419.2h5M58.4 416.7v5"/><path d="M143.8 359.2h5M146.3 356.8v5"/><path d="M133 383.3h5M135.5 380.8v5"/><path d="M133 383.3h5M135.5 380.8v5"/><path d="M121.1 410.2h5M123.6 407.7v5"/><path d="M240.9 390.8h5M243.4 388.2v5"/><path d="M213.4 373.8h5M215.9 371.3v5"/><path d="M117.3 437.7h5M119.8 435.2v5"/><path d="M96.2 431.1h5M98.8 428.6v5"/><path d="M145.1 446.2h5M147.6 443.7v5"/><path d="M117.3 437.7h5M119.8 435.2v5"/><path d="M155.5 438h5M158 435.5v5"/><path d="M227.4 427.6h5M229.9 425.1v5"/><path d="M379.9 409.1h5M382.4 406.6v5"/><path d="M379.4 435h5M381.9 432.5v5"/><path d="M564.7 421.4h5M567.2 418.9v5"/><path d="M527.8 440.5h5M530.3 438v5"/><path d="M496.5 417.2h5M499 414.7v5"/><path d="M538.1 450.1h5M540.6 447.6v5"/><path d="M635.8 340h5M638.3 337.5v5"/><path d="M608.8 338.5h5M611.2 336v5"/><path d="M641.4 359.1h5M643.9 356.6v5"/><path d="M601.8 365.5h5M604.3 363v5"/><path d="M50.9 100.8h5M53.4 98.3v5"/><path d="M95.1 149.7h5M97.6 147.2v5"/><path d="M251.8 220.7h5M254.3 218.2v5"/><path d="M504.5 141.3h5M507 138.8v5"/><path d="M572 235.8h5M574.5 233.3v5"/><path d="M528 103.6h5M530.5 101.1v5"/><path d="M580.8 188.9h5M583.2 186.4v5"/><path d="M272.7 436.3h5M275.2 433.8v5"/><path d="M313.5 439h5M316 436.5v5"/><path d="M250.7 452.2h5M253.2 449.7v5"/><path d="M497.3 409.6h5M499.8 407.1v5"/><path d="M565.6 417.8h5M568.1 415.3v5"/><path d="M108.5 54.9h5M111 52.4v5"/><path d="M108.2 70.2h5M110.7 67.7v5"/><path d="M263.9 65.5h5M266.4 63v5"/></g><g>
  <path d="M30 60.8H122" stroke="#e8e8e8" stroke-width="1.8"/>
  <rect x="82" y="54" width="3.4" height="14" fill="#0a84e0"/>
  <path d="M30 74H114.6M30 70.5V77.5M114.6 70.5V77.5M72.6 71.5V76.5M51.2 72.5V75.5M93.6 72.5V75.5" stroke="#a8a8a8" stroke-width="1"/>
  <text x="27.3" y="86" font-size="8.6" fill="#e0e0e0">0</text>
  <text x="103" y="86" font-size="8.2" fill="#e0e0e0" textLength="21.7" lengthAdjust="spacingAndGlyphs">20.0 m</text>
 </g></svg><rect x="664" y="52" width="240" height="415" fill="#f0f0f0"/><rect x="667.5" y="52.5" width="235.5" height="72" fill="#f0f0f0" stroke="#a6a6a6" stroke-width="1"/><rect x="670.3" y="57.1" width="6.5" height="6.5" fill="#ffffff" stroke="#202020" stroke-width="0.9" rx="1"/><path d="M672 59.6h3l-1.5 2z" fill="#000"/><path d="M679.3 64l2-2.3h8l-2 2.3z" fill="#f8f8f8" stroke="#b4b4b4" stroke-width="0.6"/><path d="M679.3 61.5l2-2.3h8l-2 2.3z" fill="#f8f8f8" stroke="#b4b4b4" stroke-width="0.6"/><path d="M679.3 59l2-2.3h8l-2 2.3z" fill="#f8f8f8" stroke="#b4b4b4" stroke-width="0.6"/><text x="694" y="62.1" font-size="7.8" fill="#111" textLength="21.5" lengthAdjust="spacingAndGlyphs">Layers</text><rect x="881.3" y="55.5" width="9.7" height="9.7" fill="#ececec" stroke="#c8c8c8" stroke-width="0.7"/><path d="M881.8 60.35h3" fill="none" stroke="#b0b0b0" stroke-width="0.9"/><path d="M884.9 56.85v7l3-2.2v-2.6zM890.3 56.85v7l-3-2.2v-2.6z" fill="#555"/><rect x="892.5" y="55.5" width="9.7" height="9.7" fill="#ececec" stroke="#c8c8c8" stroke-width="0.7"/><rect x="894.2" y="57.2" width="6.3" height="6.3" fill="#7a7a7a" rx="1.2"/><path d="M895.7 58.7l3.3 3.3M899 58.7l-3.3 3.3" fill="none" stroke="#fff" stroke-width="1.2"/><rect x="669" y="67.5" width="233.5" height="40.5" fill="#f0f0f0" stroke="#a0a0a0" stroke-width="1"/><circle cx="673.7" cy="72.8" r="3.4" fill="#21a31e"/><path d="M672 72.8l1.3 1.3l2.3-2.5" fill="none" stroke="#fff" stroke-width="0.9"/><ellipse cx="692.3" cy="73" rx="2.8" ry="1.8" fill="#2a5aa0"/><circle cx="692.5" cy="73" r="0.9" fill="#fff"/><rect x="701.5" y="68.5" width="8.5" height="8.5" fill="#cfe0a8"/><path d="M701.5 73l3-2l5.5 3v3h-8.5z" fill="#e8e0b0"/><circle cx="706.3" cy="71.6" r="3" fill="#c8e0c0" fill-opacity="0.6" stroke="#5a7a30" stroke-width="1"/><path d="M704 74l-3.2 3.3" fill="none" stroke="#6a4a20" stroke-width="1.6"/><text x="713" y="75.8" font-size="8" fill="#111" font-weight="bold" textLength="47.2" lengthAdjust="spacingAndGlyphs">Data Layer 1</text><ellipse cx="692.3" cy="83" rx="2.8" ry="1.8" fill="#2a5aa0"/><circle cx="692.5" cy="83" r="0.9" fill="#fff"/><rect x="699.3" y="78.4" width="203" height="10.2" fill="#0078d7"/><text x="700.6" y="85.6" font-size="4.6" fill="#000000" font-weight="bold" textLength="10.7" lengthAdjust="spacingAndGlyphs">GPX</text><text x="713" y="85.9" font-size="7.8" fill="#ffffff" textLength="70.4" lengthAdjust="spacingAndGlyphs">Downloaded GPX Data</text><rect x="670.1" y="108.8" width="44.2" height="14.3" fill="#e1e1e1" stroke="#d0d0d0" stroke-width="0.8"/><rect x="716.3" y="108.8" width="44.7" height="14.3" fill="#cccccc" stroke="#c6c6c6" stroke-width="0.8"/><rect x="763.5" y="108.8" width="44.3" height="14.3" fill="#e1e1e1" stroke="#d0d0d0" stroke-width="0.8"/><rect x="810.3" y="108.8" width="44.5" height="14.3" fill="#e1e1e1" stroke="#d0d0d0" stroke-width="0.8"/><rect x="857.3" y="108.8" width="44.2" height="14.3" fill="#e1e1e1" stroke="#d0d0d0" stroke-width="0.8"/><path d="M691.6 111l5.5 5h-3.3v5.5h-4.4v-5.5h-3.3z" fill="#2f6fc8" stroke="#1f55a0" stroke-width="0.4"/><path d="M738.6 121.6l5.5-5h-3.3v-5.5h-4.4v5.5h-3.3z" fill="#9a9a9a"/><path d="M778.8 119.5l6.5-2l6 2l-6.5 2z" fill="#b06a6a" stroke="#6a3a3a" stroke-width="0.5"/><path d="M778.8 117l6.5-2l6 2l-6.5 2z" fill="#b06a6a" stroke="#6a3a3a" stroke-width="0.5"/><path d="M778.8 114.5l6.5-2l6 2l-6.5 2z" fill="#b06a6a" stroke="#6a3a3a" stroke-width="0.5"/><circle cx="788.6" cy="112.6" r="2.9" fill="#20a040"/><path d="M787.2 112.6l1 1l1.8-2" fill="none" stroke="#fff" stroke-width="0.8"/><path d="M825.4 122.1l13.8-13" fill="none" stroke="#222" stroke-width="1"/><ellipse cx="829.3" cy="111.3" rx="2.3" ry="1.5" fill="#3a6ac0"/><rect x="835.5" y="116" width="1.3" height="4" fill="#222"/><rect x="835.5" y="120.8" width="1.3" height="1.3" fill="#222"/><path d="M874 111.5h11.5l-1 10.5h-9.5z" fill="#a0a0a0" stroke="#555" stroke-width="0.7"/><ellipse cx="879.7" cy="111.5" rx="5.7" ry="1.8" fill="#c8c8c8" stroke="#555" stroke-width="0.6"/><path d="M875 115.5h9.5M875.5 118.5h8.5" fill="none" stroke="#777" stroke-width="0.6"/><rect x="667.5" y="129.7" width="235.5" height="107.8" fill="#f0f0f0" stroke="#a6a6a6" stroke-width="1"/><rect x="670.3" y="134" width="6.5" height="6.5" fill="#ffffff" stroke="#202020" stroke-width="0.9" rx="1"/><path d="M672 136.5h3l-1.5 2z" fill="#000"/><path d="M679 133.5l2.8-2.8l1.6 0.2l6 6l-3.4 3.4l-6-6z" fill="#f4f4f4" stroke="#9a9a9a" stroke-width="0.5"/><path d="M682 134.5l1.5-1.5l4.5 4.5l-1.5 1.5z" fill="#5a8ad0"/><text x="694.2" y="138.9" font-size="7.8" fill="#111" textLength="63" lengthAdjust="spacingAndGlyphs">Tags / Memberships</text><rect x="881.3" y="133" width="9.7" height="9.7" fill="#ececec" stroke="#c8c8c8" stroke-width="0.7"/><path d="M881.8 137.85h3" fill="none" stroke="#b0b0b0" stroke-width="0.9"/><path d="M884.9 134.35v7l3-2.2v-2.6zM890.3 134.35v7l-3-2.2v-2.6z" fill="#555"/><rect x="892.5" y="133" width="9.7" height="9.7" fill="#ececec" stroke="#c8c8c8" stroke-width="0.7"/><rect x="894.2" y="134.7" width="6.3" height="6.3" fill="#7a7a7a" rx="1.2"/><path d="M895.7 136.2l3.3 3.3M899 136.2l-3.3 3.3" fill="none" stroke="#fff" stroke-width="1.2"/><rect x="669" y="144.2" width="233.5" height="77" fill="#f0f0f0" stroke="#a0a0a0" stroke-width="1"/><rect x="669.5" y="222.1" width="77" height="14.2" fill="#e1e1e1" stroke="#d0d0d0" stroke-width="0.8"/><rect x="748.5" y="222.1" width="76" height="14.2" fill="#cccccc" stroke="#c6c6c6" stroke-width="0.8"/><rect x="826.5" y="222.1" width="75" height="14.2" fill="#cccccc" stroke="#c6c6c6" stroke-width="0.8"/><path d="M699.2 224.2h2.6v3.6h3.6v2.6h-3.6v3.6h-2.6v-3.6h-3.6v-2.6h3.6z" fill="#f8f8f8" stroke="#707070" stroke-width="0.7"/><text x="707.9" y="231.4" font-size="7.8" fill="#111" textLength="13.1" lengthAdjust="spacingAndGlyphs">Add</text><path d="M777.5 223.8h6l2.5 2.5v8h-8.5z" fill="#b8b8b8"/><path d="M780 232l5-5" fill="none" stroke="#d0d0d0" stroke-width="1"/><text x="786.5" y="231.4" font-size="7.8" fill="#a0a0a0" textLength="11" lengthAdjust="spacingAndGlyphs">Edit</text><ellipse cx="852" cy="229.3" rx="4.3" ry="5" fill="#b4b4b4"/><ellipse cx="852" cy="225.3" rx="3.6" ry="1.4" fill="#d0d0d0"/><text x="858.5" y="231.4" font-size="7.8" fill="#a0a0a0" textLength="22.5" lengthAdjust="spacingAndGlyphs">Delete</text><rect x="667.5" y="242.7" width="235.5" height="67.8" fill="#f0f0f0" stroke="#a6a6a6" stroke-width="1"/><rect x="670.3" y="246.7" width="6.5" height="6.5" fill="#ffffff" stroke="#202020" stroke-width="0.9" rx="1"/><path d="M672 249.2h3l-1.5 2z" fill="#000"/><rect x="679.5" y="245.5" width="9" height="9.5" fill="#fafafa" stroke="#c4c4c4" stroke-width="0.6"/><path d="M681.5 248l2 2.5l3-2.5l-1 4.5" fill="none" stroke="#777" stroke-width="0.6"/><rect x="680.6" y="247.1" width="1.8" height="1.8" fill="#e84030"/><rect x="682.6" y="249.6" width="1.8" height="1.8" fill="#e84030"/><rect x="685.6" y="247.1" width="1.8" height="1.8" fill="#e84030"/><rect x="684.6" y="251.6" width="1.8" height="1.8" fill="#e84030"/><text x="694.2" y="250.8" font-size="7.8" fill="#111" textLength="99.9" lengthAdjust="spacingAndGlyphs">Sel.: Rel.:0 / Ways:0 / Nodes:1</text><rect x="881.3" y="245" width="9.7" height="9.7" fill="#ececec" stroke="#c8c8c8" stroke-width="0.7"/><path d="M881.8 249.85h3" fill="none" stroke="#b0b0b0" stroke-width="0.9"/><path d="M884.9 246.35v7l3-2.2v-2.6zM890.3 246.35v7l-3-2.2v-2.6z" fill="#555"/><rect x="892.5" y="245" width="9.7" height="9.7" fill="#ececec" stroke="#c8c8c8" stroke-width="0.7"/><rect x="894.2" y="246.7" width="6.3" height="6.3" fill="#7a7a7a" rx="1.2"/><path d="M895.7 248.2l3.3 3.3M899 248.2l-3.3 3.3" fill="none" stroke="#fff" stroke-width="1.2"/><rect x="669" y="256.5" width="233.5" height="35.8" fill="#ffffff" stroke="#a0a0a0" stroke-width="1"/><rect x="673.2" y="260.8" width="4" height="4" fill="#ffffff" stroke="#e03a2a" stroke-width="0.9"/><text x="682.8" y="265.6" font-size="7.8" fill="#111" textLength="124.1" lengthAdjust="spacingAndGlyphs">5960126990 (5.5456316, 95.3137732)</text><rect x="669.5" y="294.3" width="64.5" height="13.8" fill="#cccccc" stroke="#c6c6c6" stroke-width="0.8"/><rect x="734.5" y="294.3" width="10.5" height="13.8" fill="#ffffff" stroke="#d0d0d0" stroke-width="0.6"/><path d="M737.5 300h5l-2.5 2.8z" fill="#111"/><path d="M691.5 296.8h11v10h-11z" fill="none" stroke="#aaa" stroke-width="0.8" stroke-dasharray="1 1.2"/><path d="M695.5 300.5v7l1.6-1.6l1.5 2.4l1-.5l-1.5-2.3h2.3z" fill="#ccc" stroke="#aaa" stroke-width="0.5"/><text x="704.9" y="303.6" font-size="7.8" fill="#a0a0a0" textLength="19.5" lengthAdjust="spacingAndGlyphs">Select</text><rect x="747" y="294.3" width="65" height="13.8" fill="#e1e1e1" stroke="#d0d0d0" stroke-width="0.8"/><rect x="812.5" y="294.3" width="10.5" height="13.8" fill="#e4e4e4" stroke="#d0d0d0" stroke-width="0.6"/><path d="M815.5 300h5l-2.5 2.8z" fill="#111"/><rect x="769" y="297" width="8" height="9" fill="#f8f8f8" stroke="#999" stroke-width="0.6"/><circle cx="774" cy="302.5" r="2.8" fill="#a0c0e8" stroke="#5a7090" stroke-width="0.8"/><text x="781.8" y="303.6" font-size="7.8" fill="#111" textLength="21.6" lengthAdjust="spacingAndGlyphs">Search</text><rect x="825" y="294.3" width="76.5" height="13.8" fill="#e1e1e1" stroke="#d0d0d0" stroke-width="0.8"/><rect x="845.5" y="297" width="10" height="9" fill="#3050a0"/><rect x="846.5" y="297.5" width="8" height="3" fill="#f0e040"/><text x="858.5" y="303.6" font-size="7.8" fill="#111" textLength="22.8" lengthAdjust="spacingAndGlyphs">History</text><rect x="667.5" y="313" width="235.5" height="111.5" fill="#f0f0f0" stroke="#a6a6a6" stroke-width="1"/><rect x="670.3" y="319" width="6.5" height="6.5" fill="#ffffff" stroke="#202020" stroke-width="0.9" rx="1"/><path d="M672 321.5h3l-1.5 2z" fill="#000"/><path d="M679.7 318.3h9v8h-9z" fill="#e4e4e4" stroke="#c0c0c0" stroke-width="0.6"/><path d="M679 318.8v7l4.3-3.5zM689.5 318.8v7l-4.3-3.5z" fill="#2f6cc0"/><text x="694.2" y="323.7" font-size="7.8" fill="#111" textLength="159.8" lengthAdjust="spacingAndGlyphs">Conflict: 1 unresolved (Rel.:0 / Ways:0 / Nodes:1)</text><rect x="881.3" y="317.5" width="9.7" height="9.7" fill="#ececec" stroke="#c8c8c8" stroke-width="0.7"/><path d="M881.8 322.35h3" fill="none" stroke="#b0b0b0" stroke-width="0.9"/><path d="M884.9 318.85v7l3-2.2v-2.6zM890.3 318.85v7l-3-2.2v-2.6z" fill="#555"/><rect x="892.5" y="317.5" width="9.7" height="9.7" fill="#ececec" stroke="#c8c8c8" stroke-width="0.7"/><rect x="894.2" y="319.2" width="6.3" height="6.3" fill="#7a7a7a" rx="1.2"/><path d="M895.7 320.7l3.3 3.3M899 320.7l-3.3 3.3" fill="none" stroke="#fff" stroke-width="1.2"/><rect x="669" y="328" width="233.5" height="81.5" fill="#ffffff" stroke="#a0a0a0" stroke-width="1"/><rect x="669.5" y="329.4" width="232.5" height="11.3" fill="#0078d7"/><rect x="673.2" y="333" width="4" height="4" fill="#ffffff" stroke="#e03a2a" stroke-width="0.9"/><text x="682.8" y="337.8" font-size="7.8" fill="#ffffff" textLength="124.1" lengthAdjust="spacingAndGlyphs">5960126990 (5.5456316, 95.3137732)</text><rect x="669.5" y="411.3" width="115" height="13.2" fill="#e1e1e1" stroke="#d0d0d0" stroke-width="0.8"/><rect x="786.5" y="411.3" width="115" height="13.2" fill="#e1e1e1" stroke="#d0d0d0" stroke-width="0.8"/><path d="M708 413.5h10.5v9h-10.5z" fill="#e4e4e4" stroke="#c0c0c0" stroke-width="0.6"/><path d="M706.8 413.8v8.5l5.3-4.25zM719.8 413.8v8.5l-5.3-4.25z" fill="#2f6cc0"/><text x="720.7" y="420.5" font-size="7.8" fill="#111" textLength="25.2" lengthAdjust="spacingAndGlyphs">Resolve</text><path d="M828.5 413.5h8v9h-8z" fill="none" stroke="#777" stroke-width="0.7" stroke-dasharray="1 1"/><path d="M832 417v6.5l1.5-1.5l1.5 2l1-.5l-1.5-2h2z" fill="#fff" stroke="#333" stroke-width="0.5"/><text x="840.5" y="420.5" font-size="7.8" fill="#111" textLength="19.5" lengthAdjust="spacingAndGlyphs">Select</text><rect x="667.5" y="428.7" width="235.5" height="12.5" fill="#f0f0f0" stroke="#a6a6a6" stroke-width="1"/><rect x="670.3" y="431.4" width="6.5" height="6.5" fill="#ffffff" stroke="#202020" stroke-width="0.9" rx="1"/><path d="M672.8 433.2l2 1.5l-2 1.5z" fill="#000"/><text x="694.1" y="437.1" font-size="7.8" fill="#111" textLength="55.8" lengthAdjust="spacingAndGlyphs">Validation Results</text><rect x="870.1" y="430.5" width="9.7" height="9.7" fill="#e6e6e6" stroke="#c8c8c8" stroke-width="0.7"/><rect x="872.1" y="432.7" width="2" height="2" fill="#7890a0"/><rect x="875.5" y="432.7" width="2" height="2" fill="#a0b0c0"/><rect x="872.1" y="436" width="2" height="2" fill="#7890a0"/><rect x="875.5" y="436" width="2" height="2" fill="#b8c0c8"/><rect x="881.3" y="430.5" width="9.7" height="9.7" fill="#ececec" stroke="#c8c8c8" stroke-width="0.7"/><path d="M881.8 435.35h3" fill="none" stroke="#b0b0b0" stroke-width="0.9"/><path d="M884.9 431.85v7l3-2.2v-2.6zM890.3 431.85v7l-3-2.2v-2.6z" fill="#555"/><rect x="892.5" y="430.5" width="9.7" height="9.7" fill="#ececec" stroke="#c8c8c8" stroke-width="0.7"/><rect x="894.2" y="432.2" width="6.3" height="6.3" fill="#7a7a7a" rx="1.2"/><path d="M895.7 433.7l3.3 3.3M899 433.7l-3.3 3.3" fill="none" stroke="#fff" stroke-width="1.2"/><rect x="667.5" y="441.7" width="235.5" height="12.5" fill="#f0f0f0" stroke="#a6a6a6" stroke-width="1"/><rect x="670.3" y="444.4" width="6.5" height="6.5" fill="#ffffff" stroke="#202020" stroke-width="0.9" rx="1"/><path d="M672.8 446.2l2 1.5l-2 1.5z" fill="#000"/><text x="694.1" y="450.3" font-size="7.8" fill="#111" textLength="52.2" lengthAdjust="spacingAndGlyphs">Map Paint Styles</text><rect x="870.1" y="443.5" width="9.7" height="9.7" fill="#e6e6e6" stroke="#c8c8c8" stroke-width="0.7"/><rect x="872.1" y="445.7" width="2" height="2" fill="#7890a0"/><rect x="875.5" y="445.7" width="2" height="2" fill="#a0b0c0"/><rect x="872.1" y="449" width="2" height="2" fill="#7890a0"/><rect x="875.5" y="449" width="2" height="2" fill="#b8c0c8"/><rect x="881.3" y="443.5" width="9.7" height="9.7" fill="#ececec" stroke="#c8c8c8" stroke-width="0.7"/><path d="M881.8 448.35h3" fill="none" stroke="#b0b0b0" stroke-width="0.9"/><path d="M884.9 444.85v7l3-2.2v-2.6zM890.3 444.85v7l-3-2.2v-2.6z" fill="#555"/><rect x="892.5" y="443.5" width="9.7" height="9.7" fill="#ececec" stroke="#c8c8c8" stroke-width="0.7"/><rect x="894.2" y="445.2" width="6.3" height="6.3" fill="#7a7a7a" rx="1.2"/><path d="M895.7 446.7l3.3 3.3M899 446.7l-3.3 3.3" fill="none" stroke="#fff" stroke-width="1.2"/><rect x="667.5" y="454.7" width="235.5" height="12.3" fill="#f0f0f0" stroke="#a6a6a6" stroke-width="1"/><rect x="670.3" y="457.4" width="6.5" height="6.5" fill="#ffffff" stroke="#202020" stroke-width="0.9" rx="1"/><path d="M672.8 459.2l2 1.5l-2 1.5z" fill="#000"/><text x="694.1" y="463.1" font-size="7.8" fill="#111" textLength="27.1" lengthAdjust="spacingAndGlyphs">Todo list</text><rect x="881.3" y="456.5" width="9.7" height="9.7" fill="#ececec" stroke="#c8c8c8" stroke-width="0.7"/><path d="M881.8 461.35h3" fill="none" stroke="#b0b0b0" stroke-width="0.9"/><path d="M884.9 457.85v7l3-2.2v-2.6zM890.3 457.85v7l-3-2.2v-2.6z" fill="#555"/><rect x="892.5" y="456.5" width="9.7" height="9.7" fill="#ececec" stroke="#c8c8c8" stroke-width="0.7"/><rect x="894.2" y="458.2" width="6.3" height="6.3" fill="#7a7a7a" rx="1.2"/><path d="M895.7 459.7l3.3 3.3M899 459.7l-3.3 3.3" fill="none" stroke="#fff" stroke-width="1.2"/><path d="M680 435l3 3l6-7.5" fill="none" stroke="#1a5aa0" stroke-width="2"/><circle cx="684" cy="447.5" r="4.3" fill="#b8b0d8" stroke="#807098" stroke-width="0.6"/><rect x="680" y="457" width="4" height="3" fill="#fff" stroke="#888" stroke-width="0.5"/><rect x="680" y="461.5" width="4" height="3" fill="#fff" stroke="#888" stroke-width="0.5"/><path d="M683 461l2.5 3l4-6" fill="none" stroke="#20b030" stroke-width="1.5"/><rect x="665" y="310.8" width="236.5" height="115" fill="none" stroke="#f00000" stroke-width="3"/><rect x="251.7" y="238.9" width="333.5" height="159.4" fill="#f3f3f3" stroke="#d8d8d8" stroke-width="0.8"/><rect x="256.3" y="242.5" width="326.5" height="153.5" fill="#f0f0f0" stroke="#bdbdbd" stroke-width="1"/><rect x="257" y="243.2" width="325" height="1" fill="#ffffff"/><rect x="259.3" y="247.7" width="9.5" height="9.3" fill="#ffffff" stroke="#1a1a1a" stroke-width="1.1" rx="1.6"/><path d="M261.8 250.8h4.5l-2.25 2.8z" fill="#000"/><path d="M273.5 245.5h13v11h-13z" fill="#e4e4e4" stroke="#c0c0c0" stroke-width="0.7"/><path d="M274 246l6 4.5l6-4.5" fill="none" stroke="#f8f8f8" stroke-width="1"/><path d="M274 254.5h12" fill="none" stroke="#c0c0c0" stroke-width="0.8"/><path d="M272.2 246v9l6-4.5zM287 246v9l-6-4.5z" fill="#2f6cc0"/><text x="293.5" y="255.2" font-size="10" fill="#111" textLength="221.2" lengthAdjust="spacingAndGlyphs">Conflict: 1 unresolved (Rel.:0 / Ways:0 / Nodes:1)</text><rect x="552.3" y="245.8" width="13.2" height="13" fill="#ececec" stroke="#c4c4c4" stroke-width="0.8"/><path d="M553 252.3h4" fill="none" stroke="#aaa" stroke-width="1.1"/><path d="M557 247.7v9.2l4-2.9v-3.4zM564.5 247.7v9.2l-4-2.9v-3.4z" fill="#555"/><rect x="568" y="245.8" width="12.6" height="13" fill="#ececec" stroke="#c4c4c4" stroke-width="0.8"/><rect x="570.3" y="248.2" width="8" height="8.3" fill="#7a7a7a" rx="1.5"/><path d="M572.2 250.2l4.2 4.2M576.4 250.2l-4.2 4.2" fill="none" stroke="#fff" stroke-width="1.5"/><rect x="257.2" y="261.5" width="325.3" height="110.8" fill="#ffffff" stroke="#a8a8a8" stroke-width="1"/><rect x="257.7" y="262.1" width="324.3" height="17" fill="#0078d7"/><rect x="264.3" y="268.6" width="5.3" height="5.3" fill="#ffffff" stroke="#e03a2a" stroke-width="1.2"/><text x="277.7" y="274.4" font-size="10" fill="#ffffff" textLength="171.5" lengthAdjust="spacingAndGlyphs">5960126990 (5.5456316, 95.3137732)</text><rect x="258.5" y="373" width="159" height="22" fill="#e1e1e1" stroke="#cfcfcf" stroke-width="1"/><rect x="419.7" y="373.5" width="161.3" height="21.5" fill="#e1e1e1" stroke="#cfcfcf" stroke-width="1"/><path d="M312 378.5h15v13h-15z" fill="#e4e4e4" stroke="#c0c0c0" stroke-width="0.7"/><path d="M312.5 379l7 5.5l7-5.5" fill="none" stroke="#f8f8f8" stroke-width="1"/><path d="M312.5 389h14" fill="none" stroke="#c0c0c0" stroke-width="0.8"/><path d="M310.5 379.5v11l7-5.5zM328.4 379.5v11l-7-5.5z" fill="#2f6cc0"/><text x="330" y="387.6" font-size="10" fill="#111" textLength="35" lengthAdjust="spacingAndGlyphs">Resolve</text><path d="M478.5 375.5h14v13h-14z" fill="none" stroke="#555" stroke-width="0.8" stroke-dasharray="1 1.6"/><rect x="477.5" y="374.5" width="2" height="2" fill="#222"/><rect x="491.5" y="374.5" width="2" height="2" fill="#222"/><rect x="477.5" y="387.5" width="2" height="2" fill="#222"/><rect x="491.5" y="387.5" width="2" height="2" fill="#222"/><path d="M483 381v10l2.3-2.2l2 3.2l1.3-.7l-2-3h3.2z" fill="#fff" stroke="#333" stroke-width="0.7"/><text x="496.5" y="387.8" font-size="10" fill="#111" textLength="26.8" lengthAdjust="spacingAndGlyphs">Select</text><rect x="264.8" y="371.7" width="139" height="24.2" rx="5" ry="5" fill="none" stroke="#f00000" stroke-width="3"/><rect x="2" y="467" width="903" height="15" fill="#ededed"/><rect x="2" y="481.3" width="903" height="1.7" fill="#e4e4e4"/><rect x="0" y="482.2" width="907" height="0.8" fill="#d4d4d4"/><rect x="2" y="482" width="32" height="1" fill="#a89890"/><rect x="2" y="468.6" width="65.2" height="12.6" fill="#b9d1ea"/><rect x="69.2" y="468.6" width="67.8" height="12.6" fill="#b9d1ea"/><rect x="139" y="468.6" width="40.6" height="12.6" fill="#b9d1ea"/><rect x="181.3" y="468.6" width="40.7" height="12.6" fill="#b9d1ea"/><rect x="223.2" y="468.6" width="56.4" height="12.6" fill="#b9d1ea"/><rect x="281.6" y="468.6" width="132.4" height="12.6" fill="#b9d1ea"/><rect x="415.8" y="468.6" width="486.5" height="12.6" fill="#f2f2f2" stroke="#c8c8c8" stroke-width="0.7"/><circle cx="9" cy="474.9" r="4.8" fill="none" stroke="#333" stroke-width="0.9"/><path d="M4.2 474.9h9.6" fill="none" stroke="#e04020" stroke-width="1.3"/><text x="16.5" y="477.5" font-size="7.8" fill="#111" textLength="34.2" lengthAdjust="spacingAndGlyphs">5.5456128</text><circle cx="75.6" cy="474.9" r="4.8" fill="none" stroke="#333" stroke-width="0.9"/><path d="M75.6 470.1v9.6" fill="none" stroke="#e04020" stroke-width="1.3"/><text x="82.4" y="477.5" font-size="7.8" fill="#111" textLength="38.8" lengthAdjust="spacingAndGlyphs">95.3140476</text><circle cx="145.5" cy="475" r="4.8" fill="none" stroke="#333" stroke-width="0.9"/><path d="M145.5 475l4-3.5" fill="none" stroke="#e04020" stroke-width="1.2"/><path d="M182.5 479.5h11M182.5 479.5l6.5-7.5" fill="none" stroke="#111" stroke-width="1.2"/><rect x="224.3" y="475.5" width="11" height="3.5" fill="#333"/><path d="M225.5 475.5v2M227.5 475.5v1.3M229.5 475.5v2M231.5 475.5v1.3M233.5 475.5v2" fill="none" stroke="#ddd" stroke-width="0.5"/><text x="238.3" y="477.5" font-size="7.8" fill="#111" textLength="5" lengthAdjust="spacingAndGlyphs">--</text><path d="M284 476.5l4.5-5l5 3.5" fill="none" stroke="#d03020" stroke-width="1"/><path d="M286 471h3v3" fill="none" stroke="#333" stroke-width="0.6"/><path d="M287 474v7.5l1.8-1.6l1.5 2.4l1-.5l-1.5-2.3h2.5z" fill="#fff" stroke="#222" stroke-width="0.6"/><text x="296" y="477.5" font-size="7.8" fill="#111" textLength="34.8" lengthAdjust="spacingAndGlyphs">(no object)</text><text x="417.8" y="477.5" font-size="7.8" fill="#111" textLength="450.3" lengthAdjust="spacingAndGlyphs">Move objects by dragging; Shift to add to selection (Ctrl to toggle); Shift-Ctrl to rotate selected; Alt-Ctrl to scale selected; or change selection</text><svg x="24" y="52" width="641" height="415" viewBox="24 52 641 415"><path d="M594 309.5H625.5V375H664" fill="none" stroke="#f00000" stroke-width="3"/><path d="M585.5 309.5L597.5 303.5V315.5Z" fill="#f00000"/></svg></svg></body></html>
